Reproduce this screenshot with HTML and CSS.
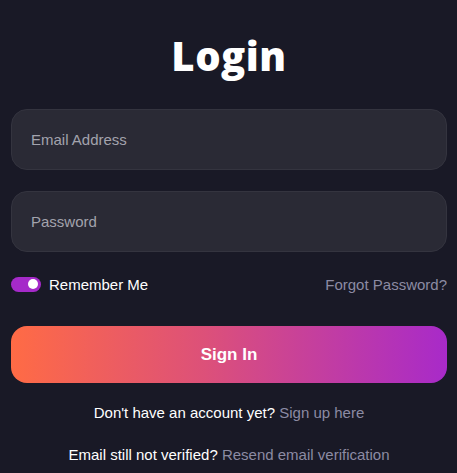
FILE: index.html
```html
<!DOCTYPE html>
<html lang="en">
<head>
<meta charset="utf-8">
<title>Login</title>
<link rel="stylesheet" href="styles.css">
</head>
<body>
<main class="login">
  <h1 class="title">Login</h1>
  <form class="form">
    <input class="field" type="email" placeholder="Email Address">
    <input class="field" type="password" placeholder="Password">
    <div class="options">
      <label class="remember">
        <span class="toggle"><span class="knob"></span></span>
        <span>Remember Me</span>
      </label>
      <a class="link" href="#">Forgot Password?</a>
    </div>
    <button class="submit" type="button">Sign In</button>
  </form>
  <p class="note">Don't have an account yet? <a class="link" href="#">Sign up here</a></p>
  <p class="note">Email still not verified? <a class="link" href="#">Resend email verification</a></p>
</main>
</body>
</html>
```
FILE: styles.css
```css
* { box-sizing: border-box; }
html, body {
  margin: 0;
  background: #191926;
  font-family: "Liberation Sans", Arial, sans-serif;
  color: #ffffff;
}
.login {
  padding: 28px 10px 0 11px;
  display: flex;
  flex-direction: column;
}
.title {
  margin: 0;
  text-align: center;
  font-family: "Open Sans", sans-serif;
  font-weight: 800;
  font-size: 40px;
  line-height: 56px;
  letter-spacing: 0.5px;
}
.form {
  margin-top: 25px;
  display: flex;
  flex-direction: column;
}
.field {
  height: 61px;
  width: 100%;
  background: #2a2a35;
  border: 1px solid #34343f;
  border-radius: 16px;
  padding: 0 19px;
  font-family: "Liberation Sans", Arial, sans-serif;
  font-size: 15px;
  color: #ffffff;
  outline: none;
}
.field + .field { margin-top: 21px; }
.field::placeholder { color: #a3a3ad; }
.options {
  margin-top: 24px;
  height: 16px;
  display: flex;
  align-items: center;
  justify-content: space-between;
  font-size: 15px;
}
.remember {
  display: flex;
  align-items: center;
  gap: 8px;
  color: #ffffff;
}
.toggle {
  width: 30px;
  height: 15px;
  border-radius: 8px;
  background: #a52ac9;
  display: flex;
  align-items: center;
  justify-content: flex-end;
  padding-right: 3px;
}
.knob {
  width: 10px;
  height: 10px;
  border-radius: 50%;
  background: #ffffff;
}
.link {
  color: #8c8ba3;
  text-decoration: none;
}
.submit {
  margin-top: 34px;
  height: 57px;
  width: 100%;
  border: none;
  border-radius: 16px;
  background: linear-gradient(90deg, #ff6b45 0%, #dc507a 45%, #a82ac9 100%);
  color: #ffffff;
  font-family: "Liberation Sans", Arial, sans-serif;
  font-weight: 700;
  font-size: 17px;
  padding-top: 1px;
}
.note {
  margin: 0;
  text-align: center;
  font-size: 15px;
  line-height: 18px;
}
.note:first-of-type { margin-top: 21px; }
.note + .note { margin-top: 24px; }
```
